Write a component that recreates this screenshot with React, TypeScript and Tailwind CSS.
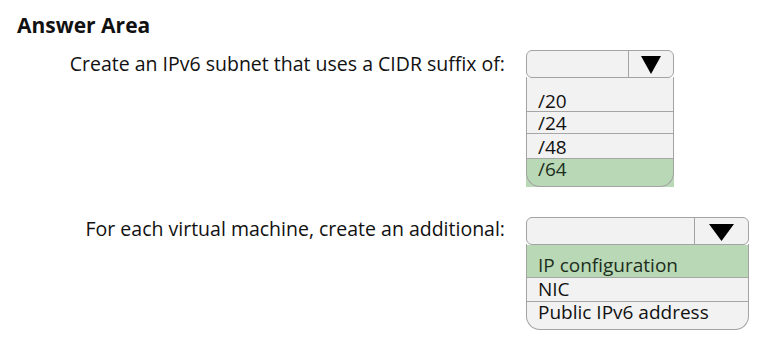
type Row = { text: string; h: string; pt: string; border: boolean; selected?: boolean };

function Caret({ w, h }: { w: number; h: number }) {
  return (
    <svg width={w} height={h} viewBox="0 0 20 18" preserveAspectRatio="none">
      <polygon points="0,0 20,0 10,18" fill="#000" />
    </svg>
  );
}

function Dropdown({
  width,
  arrowW,
  caretW,
  caretH,
  rows,
  squareBottom,
}: {
  width: string;
  arrowW: string;
  caretW: number;
  caretH: number;
  rows: Row[];
  squareBottom?: boolean;
}) {
  return (
    <div className={`${width} relative`}>
      {/* header */}
      <div className="h-[28px] flex border border-[#a3a3a3] rounded-[6px] bg-[#f2f2f2]">
        <div className="flex-1" />
        <div className={`${arrowW} border-l border-[#a3a3a3] flex items-center justify-center pt-[2px]`}>
          <Caret w={caretW} h={caretH} />
        </div>
      </div>

      {/* options */}
      <div className={squareBottom ? "" : "rounded-b-[14px] overflow-hidden bg-[#f2f2f2]"}>
        {rows.map((r) => (
          <div
            key={r.text}
            className={`${r.h} ${r.pt} pl-[12px] text-[19px] leading-[20px] ${
              r.border ? "border-t border-[#a6a6a6]" : ""
            } ${r.selected ? "bg-[#b9d8b6] text-[#1c2e1c]" : "bg-[#f2f2f2] text-[#111]"}`}
          >
            {r.text}
          </div>
        ))}
      </div>

      {/* outline drawn over the rows */}
      <div className="absolute left-0 right-0 top-[27px] bottom-0 border-x border-b border-[#a3a3a3] rounded-b-[14px] pointer-events-none" />
    </div>
  );
}

export default function App() {
  return (
    <div className="w-[764px] h-[349px] bg-white font-['Open_Sans',sans-serif] text-[#111] overflow-hidden">
      <h1 className="pl-[17px] pt-[11px] text-[21px] font-bold leading-[28px]">Answer Area</h1>

      <div className="mt-[11px] flex flex-col gap-[30px]">
        <div className="flex items-start">
          <div className="w-[505px] text-right text-[19.5px] leading-[28px]">
            Create an IPv6 subnet that uses a CIDR suffix of:
          </div>
          <div className="ml-[21px]">
            <Dropdown
              width="w-[148px]"
              arrowW="w-[45px]"
              caretW={20}
              caretH={18}
              squareBottom
              rows={[
                { text: "/20", h: "h-[33px]", pt: "pt-[13px]", border: false },
                { text: "/24", h: "h-[22px]", pt: "pt-[1px]", border: true },
                { text: "/48", h: "h-[25px]", pt: "pt-[3px]", border: true },
                { text: "/64", h: "h-[29px]", pt: "pt-0", border: true, selected: true },
              ]}
            />
          </div>
        </div>

        <div className="flex items-start">
          <div className="w-[505px] text-right text-[19.5px] leading-[24px]">
            For each virtual machine, create an additional:
          </div>
          <div className="ml-[21px]">
            <Dropdown
              width="w-[223px]"
              arrowW="w-[54px]"
              caretW={25}
              caretH={17}
              rows={[
                { text: "IP configuration", h: "h-[32px]", pt: "pt-[10px]", border: false, selected: true },
                { text: "NIC", h: "h-[24px]", pt: "pt-[1px]", border: true },
                { text: "Public IPv6 address", h: "h-[29px]", pt: "pt-0", border: true },
              ]}
            />
          </div>
        </div>
      </div>
    </div>
  );
}
